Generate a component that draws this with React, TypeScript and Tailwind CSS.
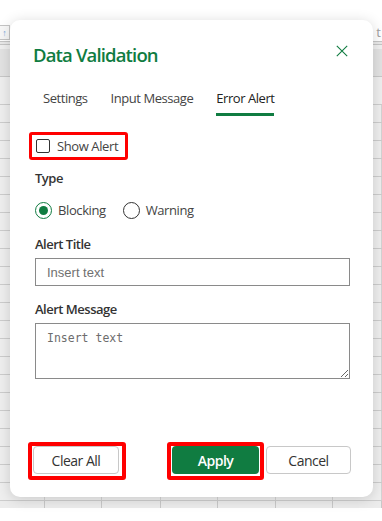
import React from "react";

// column widths of the sheet behind the dialog (sum = 382)
const COLS = [45, 57, 59, 57, 58, 57, 49];

function SheetRow({ h, fill = "bg-[#efefef]" }: { h: string; fill?: string }) {
  return (
    <div className={`flex border-b border-[#cdcdcd] ${h} ${fill}`}>
      {COLS.map((w, i) => (
        <div
          key={i}
          className="h-full border-r border-[#d4d4d4]"
          style={{ width: w }}
        />
      ))}
    </div>
  );
}

function Sheet() {
  const rows = Array.from({ length: 22 });
  return (
    <div className="flex flex-col">
      <div className="h-[23px] bg-white" />
      {/* toolbar strip */}
      <div className="flex h-[18px] items-center justify-between bg-white">
        <div className="flex h-[15px] w-[10px] items-center justify-center border border-l-0 border-[#c4c4c4] bg-[#f7f7f7] text-[9px] leading-none text-[#7aa7d9]">
          ↑
        </div>
        <span className="pr-[1px] font-['Open_Sans',sans-serif] text-[13px] leading-none text-[#a0a0a0]">
          t
        </span>
      </div>
      <div className="h-[4px] border-y border-[#c6c6c6] bg-[#e9e9e9]" />
      <div className="flex h-[32px] flex-col border-b border-[#c8c8c8]">
        <div className="h-[4px] bg-[#f0f0f0]" />
        <div className="flex-1 bg-[#e3e3e3]" />
      </div>
      <div className="h-[28px] border-b border-[#cdcdcd] bg-[#efefef]" />
      {rows.map((_, i) => (
        <SheetRow key={i} h="h-[18px]" />
      ))}
      <div className="flex h-[7px] bg-[#ececec]">
        {COLS.map((w, i) => (
          <div
            key={i}
            className="h-full border-r border-[#c8c8c8]"
            style={{ width: w }}
          />
        ))}
      </div>
      <div className="h-[14px] bg-white" />
    </div>
  );
}

function CloseIcon() {
  return (
    <svg width="12" height="12" viewBox="0 0 12 12" aria-hidden>
      <path
        d="M0.8 0.8 L11.2 11.2 M11.2 0.8 L0.8 11.2"
        stroke="#107c41"
        strokeWidth="1.1"
        fill="none"
      />
    </svg>
  );
}

function Radio({ checked, label }: { checked?: boolean; label: string }) {
  return (
    <label className="flex items-center gap-[6px]">
      <span
        className={`flex h-[17px] w-[17px] items-center justify-center rounded-full border ${
          checked ? "border-[#107c41]" : "border-[#333]"
        }`}
      >
        {checked && <span className="h-[9px] w-[9px] rounded-full bg-[#107c41]" />}
      </span>
      <span className="text-[13px] leading-[18px] text-[#444]">{label}</span>
    </label>
  );
}

function Highlight({ className }: { className: string }) {
  return (
    <span
      className={`pointer-events-none absolute rounded-[3px] border-[#ff0000] ${className}`}
    />
  );
}

export default function App() {
  return (
    <div className="relative h-[521px] w-[382px] overflow-hidden bg-white font-['Open_Sans',sans-serif]">
      <Sheet />

      {/* Dialog */}
      <div className="absolute left-[10px] top-[20px] flex h-[477px] w-[363px] flex-col rounded-[10px] bg-white tracking-[-0.4px] shadow-[0_2px_14px_rgba(0,0,0,0.16)]">
        <div className="flex items-start justify-between pl-[23px] pr-[25px] pt-[22px]">
          <h2 className="text-[18.5px] font-semibold leading-[26px] tracking-[-0.85px] text-[#107c41]">
            Data Validation
          </h2>
          <div className="pt-[3px]">
            <CloseIcon />
          </div>
        </div>

        {/* tabs */}
        <div className="mt-[20px] flex gap-[23px] pl-[33px] tracking-[-0.45px]">
          <div className="pb-[5px] text-[13px] leading-[20px] text-[#444]">Settings</div>
          <div className="pb-[5px] text-[13px] leading-[20px] text-[#444]">
            Input Message
          </div>
          <div className="border-b-[3px] border-[#107c41] pb-[5px] text-[13px] leading-[20px] text-[#222]">
            Error Alert
          </div>
        </div>

        {/* body */}
        <div className="flex flex-col pl-[25px] pr-[23px]">
          <div className="mt-[21px] flex">
            <label className="relative flex h-[18px] items-center gap-[7px] pl-[1px]">
              <span className="h-[14px] w-[14px] rounded-[2px] border border-[#333] bg-white" />
              <span className="text-[13px] leading-[18px] text-[#444]">Show Alert</span>
              <Highlight className="-bottom-[5px] -left-[6px] -right-[10px] -top-[5px] border-[3px]" />
            </label>
          </div>

          <div className="mt-[14px] text-[13px] font-semibold leading-[18px] tracking-[-0.5px] text-[#333]">
            Type
          </div>
          <div className="mt-[14px] flex items-center gap-[17px]">
            <Radio checked label="Blocking" />
            <Radio label="Warning" />
          </div>

          <div className="mt-[16px] text-[13px] font-semibold leading-[18px] tracking-[-0.5px] text-[#333]">
            Alert Title
          </div>
          <input
            className="mt-[5px] h-[28px] w-full border border-[#8a8a8a] bg-white px-[11px] font-['Liberation_Sans',Arial,sans-serif] text-[13px] tracking-normal text-[#333] outline-none placeholder:text-[#707070]"
            placeholder="Insert text"
          />

          <div className="mt-[14px] text-[13px] font-semibold leading-[18px] tracking-[-0.5px] text-[#333]">
            Alert Message
          </div>
          <textarea
            className="mt-[5px] h-[56px] w-full border border-[#8a8a8a] bg-white px-[11px] pt-[7px] font-['DejaVu_Sans_Mono',monospace] text-[11.5px] leading-[15px] tracking-normal text-[#333] outline-none placeholder:text-[#6d6d6d]"
            placeholder="Insert text"
          />
        </div>

        {/* footer */}
        <div className="mt-auto flex items-center justify-between pl-[23px] pr-[22px] pb-[23px]">
          <div className="relative">
            <button className="h-[28px] w-[86px] rounded-[4px] border border-[#c8c8c8] bg-white text-[14px] tracking-[-0.5px] text-[#333]">
              Clear All
            </button>
            <Highlight className="-bottom-[6px] -left-[5px] -right-[7px] -top-[4px] border-4" />
          </div>
          <div className="flex gap-[7px]">
            <div className="relative">
              <button className="h-[28px] w-[87px] rounded-[4px] bg-[#107c41] text-[14px] font-semibold tracking-[-0.5px] text-white">
                Apply
              </button>
              <Highlight className="-bottom-[6px] -left-[5px] -right-[5px] -top-[4px] border-4" />
            </div>
            <button className="h-[28px] w-[85px] rounded-[4px] border border-[#c8c8c8] bg-white text-[14px] tracking-[-0.5px] text-[#333]">
              Cancel
            </button>
          </div>
        </div>
      </div>
    </div>
  );
}
